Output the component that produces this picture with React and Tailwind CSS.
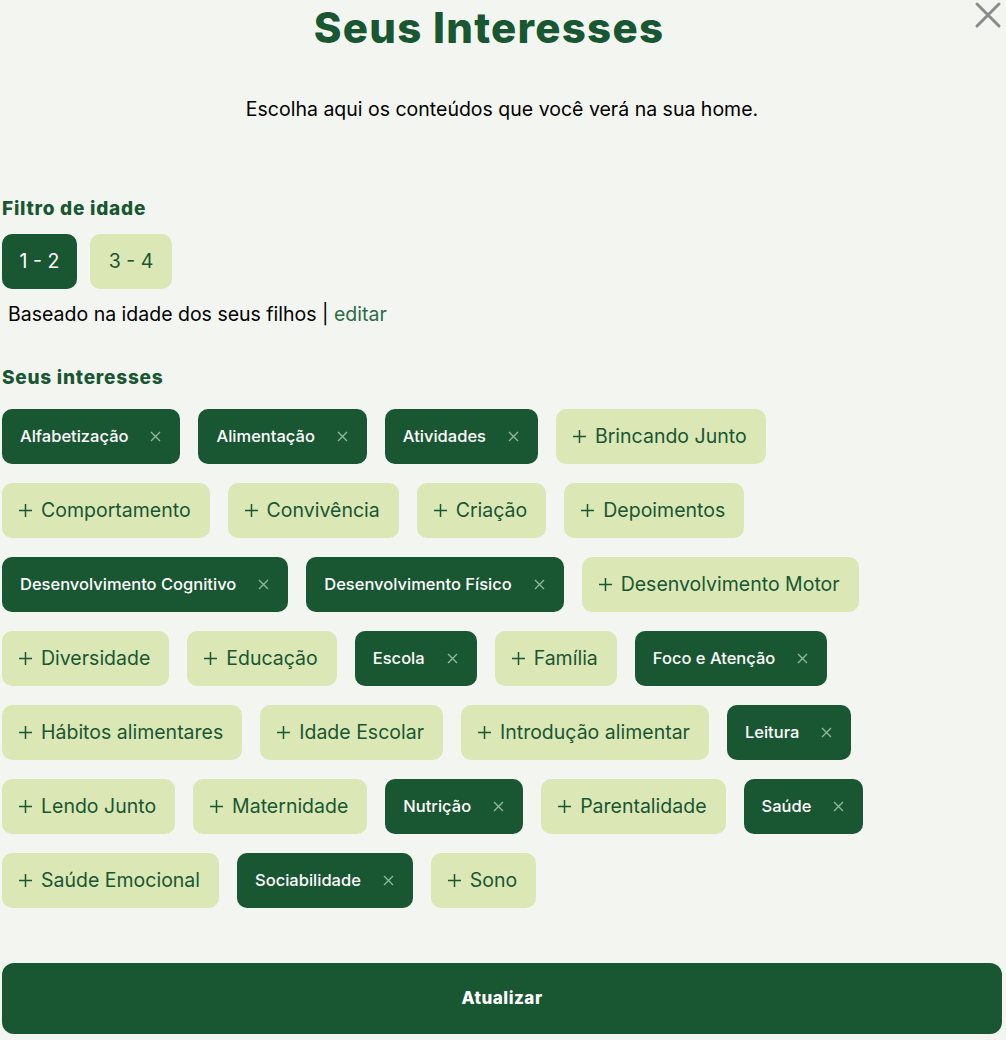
import React from 'react';

const interests = [
  { name: 'Alfabetização', on: true },
  { name: 'Alimentação', on: true },
  { name: 'Atividades', on: true },
  { name: 'Brincando Junto', on: false },
  { name: 'Comportamento', on: false },
  { name: 'Convivência', on: false },
  { name: 'Criação', on: false },
  { name: 'Depoimentos', on: false },
  { name: 'Desenvolvimento Cognitivo', on: true },
  { name: 'Desenvolvimento Físico', on: true },
  { name: 'Desenvolvimento Motor', on: false },
  { name: 'Diversidade', on: false },
  { name: 'Educação', on: false },
  { name: 'Escola', on: true },
  { name: 'Família', on: false },
  { name: 'Foco e Atenção', on: true },
  { name: 'Hábitos alimentares', on: false },
  { name: 'Idade Escolar', on: false },
  { name: 'Introdução alimentar', on: false },
  { name: 'Leitura', on: true },
  { name: 'Lendo Junto', on: false },
  { name: 'Maternidade', on: false },
  { name: 'Nutrição', on: true },
  { name: 'Parentalidade', on: false },
  { name: 'Saúde', on: true },
  { name: 'Saúde Emocional', on: false },
  { name: 'Sociabilidade', on: true },
  { name: 'Sono', on: false },
];

const Chip = ({ name, on }) => {
  if (on) {
    return (
      <button className="h-[55px] mr-[18px] mb-[19px] flex items-center pl-[18px] pr-[19px] rounded-[10px] bg-[#195632] text-white text-[16.5px] font-medium">
        <span>{name}</span>
        <svg className="ml-[22px]" width="11" height="11" viewBox="0 0 11 11" fill="none" stroke="#8fb89a" strokeWidth="1.4">
          <path d="M1 1 L10 10 M10 1 L1 10" />
        </svg>
      </button>
    );
  }
  return (
    <button className="h-[55px] mr-[18px] mb-[19px] flex items-center pl-[17px] pr-[19px] rounded-[10px] bg-[#dbe8b6] text-[#195632] text-[19.5px]">
      <svg className="mr-[9px]" width="13" height="13" viewBox="0 0 13 13" fill="none" stroke="currentColor" strokeWidth="1.5">
        <path d="M6.5 0 V13 M0 6.5 H13" />
      </svg>
      <span>{name}</span>
    </button>
  );
};

const App = () => {
  return (
    <div className="min-h-[1040px] bg-[#f3f5f0] font-['Inter',sans-serif] text-black">
      <div className="w-[1000px] ml-[2px] relative">
        <button className="absolute right-[0px] top-[1px] text-[#8a8a8a]">
          <svg width="28" height="28" viewBox="0 0 28 28" fill="none" stroke="currentColor" strokeWidth="3" strokeLinecap="round">
            <path d="M3 3 L25 25 M25 3 L3 25" />
          </svg>
        </button>
        <h1 className="text-center pr-[26px] pt-[2px] text-[42px] leading-[52px] font-extrabold tracking-[0.03em] text-[#195632]">
          Seus Interesses
        </h1>
        <p className="text-center mt-[43px] text-[19.5px] leading-[24px]">
          Escolha aqui os conteúdos que você verá na sua home.
        </p>

        <h2 className="mt-[76px] text-[19px] leading-[24px] font-extrabold tracking-[0.04em] text-[#195632]">Filtro de idade</h2>
        <div className="flex gap-[13px] mt-[13px]">
          <button className="h-[55px] w-[75px] rounded-[10px] bg-[#195632] text-white text-[19.5px]">1 - 2</button>
          <button className="h-[55px] w-[82px] rounded-[10px] bg-[#dbe8b6] text-[#195632] text-[19.5px]">3 - 4</button>
        </div>
        <p className="mt-[13px] ml-[6px] text-[19.5px] leading-[24px]">
          Baseado na idade dos seus filhos | <span className="text-[#2c6b45]">editar</span>
        </p>

        <h2 className="mt-[40px] text-[19px] leading-[24px] font-extrabold tracking-[0.04em] text-[#195632]">Seus interesses</h2>
        <div className="flex flex-wrap mt-[19px]">
          {interests.map(i => (
            <Chip key={i.name} {...i} />
          ))}
        </div>

        <button className="mt-[36px] w-full h-[71px] rounded-[12px] bg-[#195632] text-white text-[17px] font-extrabold tracking-[0.03em]">
          Atualizar
        </button>
      </div>
    </div>
  );
};

export default App;
